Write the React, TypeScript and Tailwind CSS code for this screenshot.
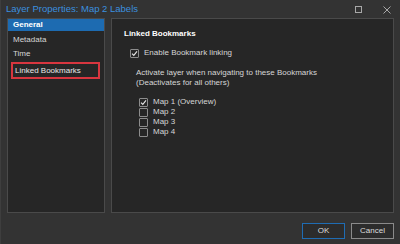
import React from "react";

const font = { fontFamily: '"Liberation Sans", Arial, sans-serif' };

function Check({ checked }: { checked?: boolean }) {
  return (
    <span className="w-[9px] h-[9px] border border-[#8c8c8c] rounded-[1px] bg-[#262626] flex items-center justify-center shrink-0">
      {checked && (
        <svg width="7" height="7" viewBox="0 0 7 7">
          <path d="M1 3.6 L2.8 5.4 L6 1.4" stroke="#e6e6e6" strokeWidth="1.1" fill="none" />
        </svg>
      )}
    </span>
  );
}

export default function App() {
  const maps = ["Map 1 (Overview)", "Map 2", "Map 3", "Map 4"];

  return (
    <div style={font} className="w-[400px] h-[244px] bg-[#333333] flex flex-col text-[8px] text-[#d6d6d6] border-l border-[#3e3e3e]">
      {/* title bar */}
      <div className="h-[18px] flex items-center pl-[5px] pr-[9px] pt-[1px]">
        <span className="text-[9.5px] text-[#3b8fdf]">Layer Properties: Map 2 Labels</span>
        <div className="ml-auto flex items-center gap-[21px]">
          <svg width="7" height="7" viewBox="0 0 7 7">
            <rect x="0.5" y="0.5" width="6" height="6" stroke="#a8a8a8" fill="none" />
          </svg>
          <svg width="8" height="8" viewBox="0 0 8 8">
            <path d="M0.5 0.5 L7.5 7.5 M7.5 0.5 L0.5 7.5" stroke="#a8a8a8" strokeWidth="1" />
          </svg>
        </div>
      </div>

      {/* body */}
      <div className="h-[195px] flex gap-[6px] pl-[6px] pr-[6px]">
        <div className="w-[98px] bg-[#262626] border border-[#4a4a4a] flex flex-col">
          <div className="h-[12px] bg-[#1d6bb1] text-white font-bold pl-[5px] flex items-center">General</div>
          <div className="h-[14px] mt-[2px] pl-[5px] flex items-center">Metadata</div>
          <div className="h-[14px] pl-[5px] flex items-center">Time</div>
          <div className="h-[17px] mt-[1px] ml-[3px] mr-[4px] border-2 border-[#d8363f] pl-[2px] flex items-center text-[#e8e8e8]">
            Linked Bookmarks
          </div>
        </div>

        <div className="flex-1 bg-[#262626] border border-[#4a4a4a] pl-[12px] pt-[10px] flex flex-col">
          <div className="h-[10px] leading-[10px] font-bold text-white">Linked Bookmarks</div>
          <div className="h-[10px] mt-[9px] ml-[6px] flex items-center gap-[5px]">
            <Check checked />
            <span>Enable Bookmark linking</span>
          </div>
          <div className="mt-[10px] ml-[12px] leading-[10px]">
            <div>Activate layer when navigating to these Bookmarks</div>
            <div>(Deactivates for all others)</div>
          </div>
          <div className="mt-[9px] ml-[15px] flex flex-col">
            {maps.map((m, i) => (
              <div key={m} className="h-[10px] flex items-center gap-[5px]">
                <Check checked={i === 0} />
                <span>{m}</span>
              </div>
            ))}
          </div>
        </div>
      </div>

      {/* footer */}
      <div className="flex justify-end gap-[6px] pr-[6px] mt-[10px]">
        <button className="w-[43px] h-[16px] border border-[#1f6cb3] bg-[#2c2c2c] text-[#dcdcdc] text-[8px] flex items-center justify-center">
          OK
        </button>
        <button className="w-[43px] h-[16px] border border-[#8a8a8a] bg-[#2c2c2c] text-[#dcdcdc] text-[8px] flex items-center justify-center">
          Cancel
        </button>
      </div>
    </div>
  );
}
